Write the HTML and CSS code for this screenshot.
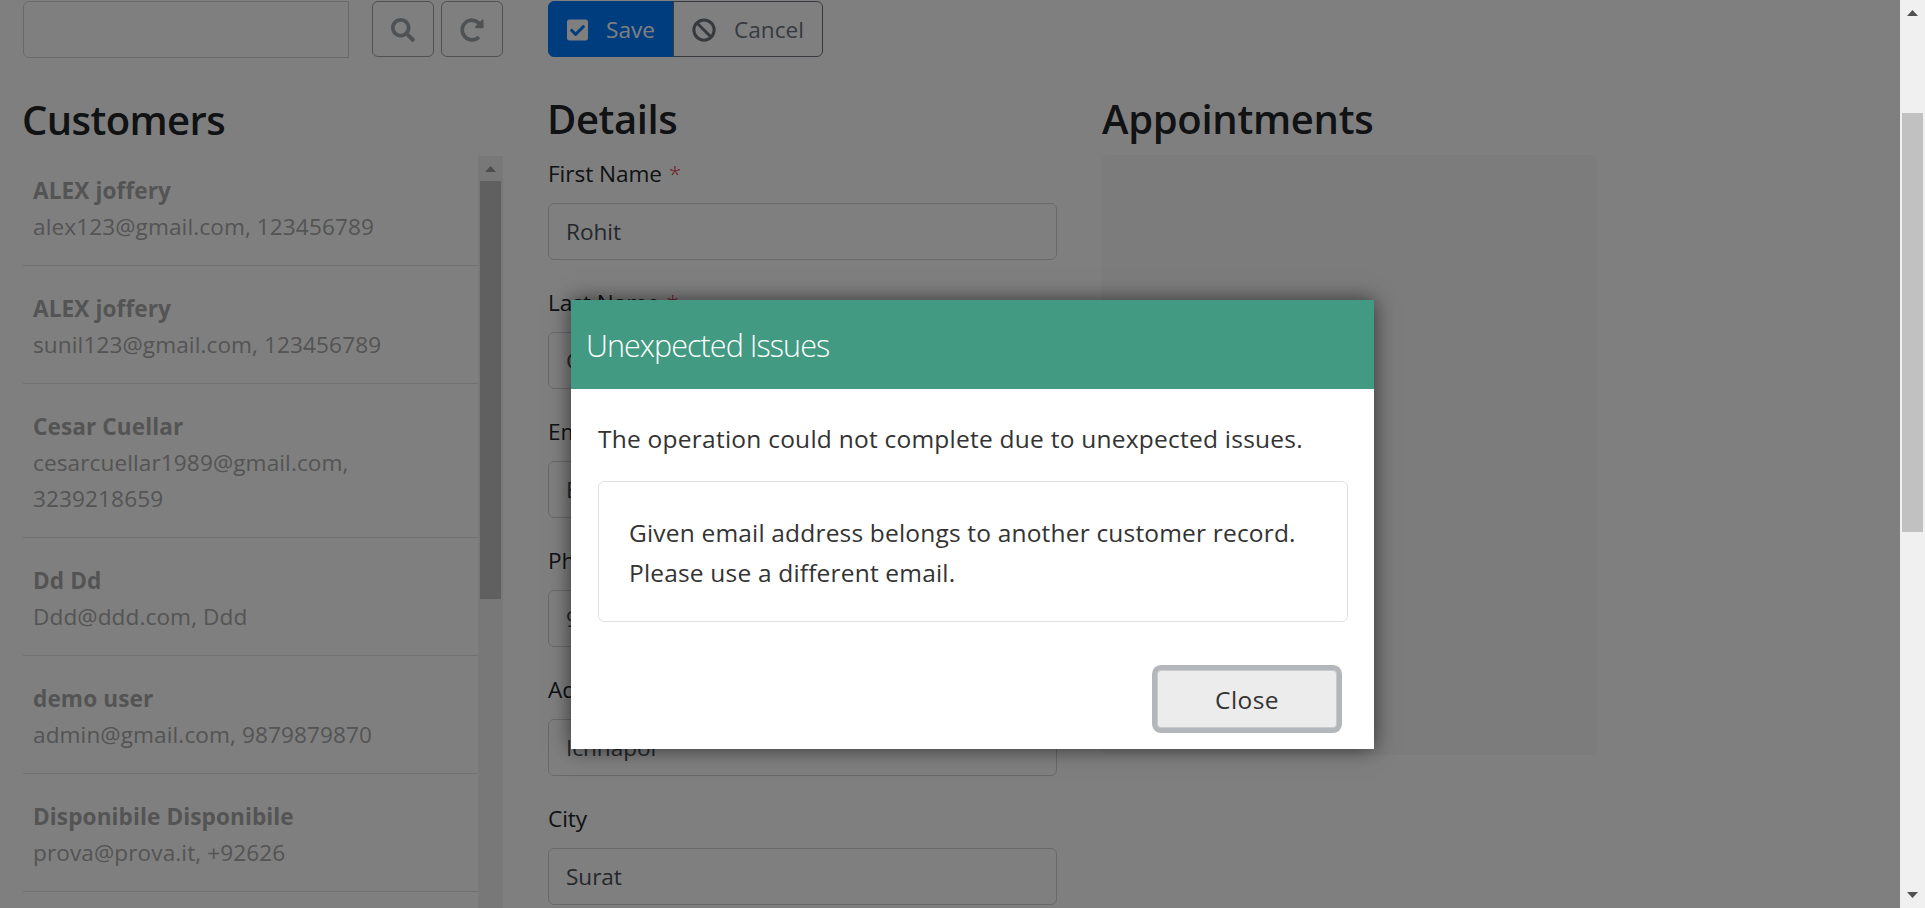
FILE: index.html
```
<!DOCTYPE html>
<html lang="en">
<head>
<meta charset="utf-8">
<title>Customers</title>
<link rel="stylesheet" href="styles.css">
</head>
<body>
<div class="viewport">
  <main class="page">
    <section class="customers">
      <div class="toolbar">
        <div class="search"></div>
        <button class="btn icon-btn"><svg viewBox="0 0 512 512"><path d="M505 442.7L405.3 343c-4.5-4.5-10.6-7-17-7H372c27.6-35.3 44-79.7 44-128C416 93.1 322.9 0 208 0S0 93.1 0 208s93.1 208 208 208c48.3 0 92.7-16.4 128-44v16.3c0 6.4 2.5 12.5 7 17l99.7 99.7c9.4 9.4 24.6 9.4 33.9 0l28.3-28.3c9.4-9.4 9.4-24.6.1-34zM208 336c-70.7 0-128-57.2-128-128 0-70.7 57.2-128 128-128 70.7 0 128 57.2 128 128 0 70.7-57.2 128-128 128z"/></svg></button>
        <button class="btn icon-btn"><svg viewBox="0 0 512 512"><path d="M256.455 8c66.269.119 126.437 26.233 170.859 68.685l35.715-35.715C478.149 25.851 504 36.559 504 57.941V192c0 13.255-10.745 24-24 24H345.941c-21.382 0-32.09-25.851-16.971-40.971l41.75-41.75c-30.864-28.899-70.801-44.907-113.23-45.273-92.398-.798-170.283 73.977-169.484 169.442C88.764 348.009 162.184 424 256 424c41.127 0 79.997-14.678 110.629-41.556 4.743-4.161 11.906-3.908 16.368.553l39.662 39.662c4.872 4.872 4.631 12.815-.482 17.433C378.202 479.813 319.926 504 256 504 119.034 504 8.001 392.967 8 256.002 7.999 119.193 119.646 7.755 256.455 8z"/></svg></button>
      </div>
      <h3 class="h-customers"><span>Customers</span></h3>
      <div class="list">
        <div class="rows">
          <div class="row"><b>ALEX joffery</b><span>alex123@gmail.com, 123456789</span></div>
          <div class="row"><b>ALEX joffery</b><span>sunil123@gmail.com, 123456789</span></div>
          <div class="row"><b>Cesar Cuellar</b><span>cesarcuellar1989@gmail.com,<br>3239218659</span></div>
          <div class="row"><b>Dd Dd</b><span>Ddd@ddd.com, Ddd</span></div>
          <div class="row"><b>demo user</b><span>admin@gmail.com, 9879879870</span></div>
          <div class="row"><b>Disponibile Disponibile</b><span>prova@prova.it, +92626</span></div>
        </div>
        <div class="bar bar-list"><i class="up"></i><div class="thumb"></div></div>
      </div>
    </section>
    <section class="details">
      <div class="toolbar group">
        <button class="btn save"><svg viewBox="0 0 448 512"><path d="M400 480H48c-26.51 0-48-21.49-48-48V80c0-26.51 21.49-48 48-48h352c26.51 0 48 21.49 48 48v352c0 26.51-21.49 48-48 48zm-204.686-98.059l184-184c6.248-6.248 6.248-16.379 0-22.627l-22.627-22.627c-6.248-6.248-16.379-6.249-22.628 0L184 302.745l-70.059-70.059c-6.248-6.248-16.379-6.248-22.628 0l-22.627 22.627c-6.248 6.248-6.248 16.379 0 22.627l104 104c6.249 6.25 16.379 6.25 22.628.001z"/></svg><span>Save</span></button>
        <button class="btn cancel"><svg viewBox="0 0 512 512"><g fill="none" stroke="currentColor" stroke-width="64"><circle cx="256" cy="256" r="216"/><path d="M106 106l300 300"/></g></svg><span>Cancel</span></button>
      </div>
      <h3 class="h-details"><span>Details</span></h3>
      <div class="field"><label>First Name <em>*</em></label><div class="input">Rohit</div></div>
      <div class="field"><label>Last Name <em>*</em></label><div class="input">G</div></div>
      <div class="field"><label>Email</label><div class="input">E</div></div>
      <div class="field"><label>Phone</label><div class="input">9</div></div>
      <div class="field"><label>Address</label><div class="input">Ichhapor</div></div>
      <div class="field"><label>City</label><div class="input">Surat</div></div>
    </section>
    <section class="appointments">
      <h3 class="h-appointments"><span>Appointments</span></h3>
      <div class="well"></div>
    </section>
  </main>
  <div class="bar bar-page"><i class="up"></i><div class="thumb"></div><i class="down"></i></div>
</div>
<div class="backdrop">
  <div class="modal">
    <div class="modal-head"><span>Unexpected Issues</span></div>
    <div class="modal-body">
      <p class="lead"><span>The operation could not complete due to unexpected issues.</span></p>
      <div class="card"><span>Given email address belongs to another customer record.</span><br><span>Please use a different email.</span></div>
      <button class="close">Close</button>
    </div>
  </div>
</div>
</body>
</html>
```
FILE: styles.css
```
* { box-sizing: border-box; }
body {
  margin: 0;
  height: 908px;
  overflow: hidden;
  background: #fff;
  color: #212529;
  font: 22.6px/36px "Open Sans", "Noto Sans", sans-serif;
}
button { font: inherit; margin: 0; padding: 0; }
.viewport { display: flex; height: 908px; overflow: hidden; }
.page { flex: 1; display: flex; height: 908px; padding: 1px 0 0 23px; overflow: hidden; }
h3 { margin: 0; font-weight: 600; font-size: 40px; line-height: 50px; white-space: nowrap; letter-spacing: -0.6px; }

.customers { width: 480px; margin-right: 45px; }
.toolbar { display: flex; height: 57px; align-items: flex-start; }
.search { width: 326px; height: 57px; margin-right: 23px; border: 1px solid #ced4da; border-radius: 6px 0 0 6px; }
.btn { display: flex; align-items: center; height: 56px; padding-top: 2px; border: 1px solid #6c757d; background: none; color: #6c757d; }
.btn svg { height: 24px; fill: currentColor; }
.icon-btn { width: 62px; border-radius: 6px; justify-content: center; color: #9ea4a9; border-color: #9ea4a9; }
.icon-btn + .icon-btn { margin-left: 7px; }
.h-customers { margin: 37px 0 0 -1px; }

.list { display: flex; height: 760px; margin-top: 11px; }
.rows { flex: 1; letter-spacing: 0.1px; }
.row { padding: 25px 10px 20px; border-bottom: 1px solid #dee2e6; color: #a8a8a8; white-space: nowrap; }
.row:first-child { padding-top: 17px; }
.row b, .row span { display: block; }
.row b { font-weight: 700; }

.bar { width: 25px; flex: none; display: flex; flex-direction: column; align-items: center; background: #f0f0f0; }
.thumb { width: 21px; background: #c1c1c1; }
.up, .down { width: 11px; height: 6px; background: #505050; }
.up { margin-top: 10px; clip-path: polygon(50% 0, 100% 100%, 0 100%); }
.down { margin-top: auto; margin-bottom: 10px; clip-path: polygon(0 0, 100% 0, 50% 100%); }
.bar-list .up { background: #9a9a9a; }
.bar-list .thumb { height: 418px; margin-top: 9px; }
.bar-page .thumb { height: 419px; margin-top: 97px; }

.details { width: 509px; margin-right: 45px; }
.save { width: 126px; padding-left: 18px; background: #007bff; border-color: #007bff; color: #fff; border-radius: 6px 0 0 6px; }
.cancel { width: 150px; margin-left: -1px; padding-left: 18px; border-radius: 0 6px 6px 0; }
.save span, .cancel span { margin-left: 18px; }
.h-details { margin: 36px 0 0 -1px; letter-spacing: -0.4px; }
.field { margin-bottom: 25px; letter-spacing: -0.05px; }
.h-details + .field { margin-top: 12px; }
.field label { display: block; margin-bottom: 11px; }
.field em { margin-left: 1px; color: #dc3545; font-style: normal; font-weight: 300; }
.input { height: 57px; padding-left: 17px; border: 1px solid #ced4da; border-radius: 6px; line-height: 55px; color: #495057; }

.appointments { width: 495px; padding-top: 93px; }
.h-appointments { letter-spacing: -0.3px; }
.well { height: 600px; margin-top: 11px; background: #f8f8f8; border-radius: 6px; }

.backdrop {
  position: absolute;
  inset: 0 25px 0 0;
  padding: 300px 0 0 571px;
  background: rgba(0, 0, 0, .5);
}
.modal { width: 803px; height: 449px; background: #fff; box-shadow: 0 0 20px rgba(0, 0, 0, .6); color: #333; }
.modal-head { height: 89px; padding-left: 15px; background: #429a82; color: #fff; font-size: 30.5px; font-weight: 300; line-height: 91px; letter-spacing: -0.95px; }
.modal-body { display: flex; flex-direction: column; padding: 30px 26px 0 27px; font-size: 24.5px; line-height: 40px; letter-spacing: 0.18px; white-space: nowrap; }
.lead { margin: 0; letter-spacing: 0.24px; }
.card { height: 141px; margin-top: 22px; padding: 31px 30px; border: 1px solid #dee2e6; border-radius: 6px; }
.close {
  align-self: flex-end;
  width: 180px;
  height: 58px;
  margin: 48px 11px 0 0;
  padding-top: 2px;
  border: 1px solid #c8cbce;
  border-radius: 4px;
  background: #ececec;
  box-shadow: 0 0 0 5px #b3b7bc;
  color: #333;
  letter-spacing: 0.4px;
}
```
